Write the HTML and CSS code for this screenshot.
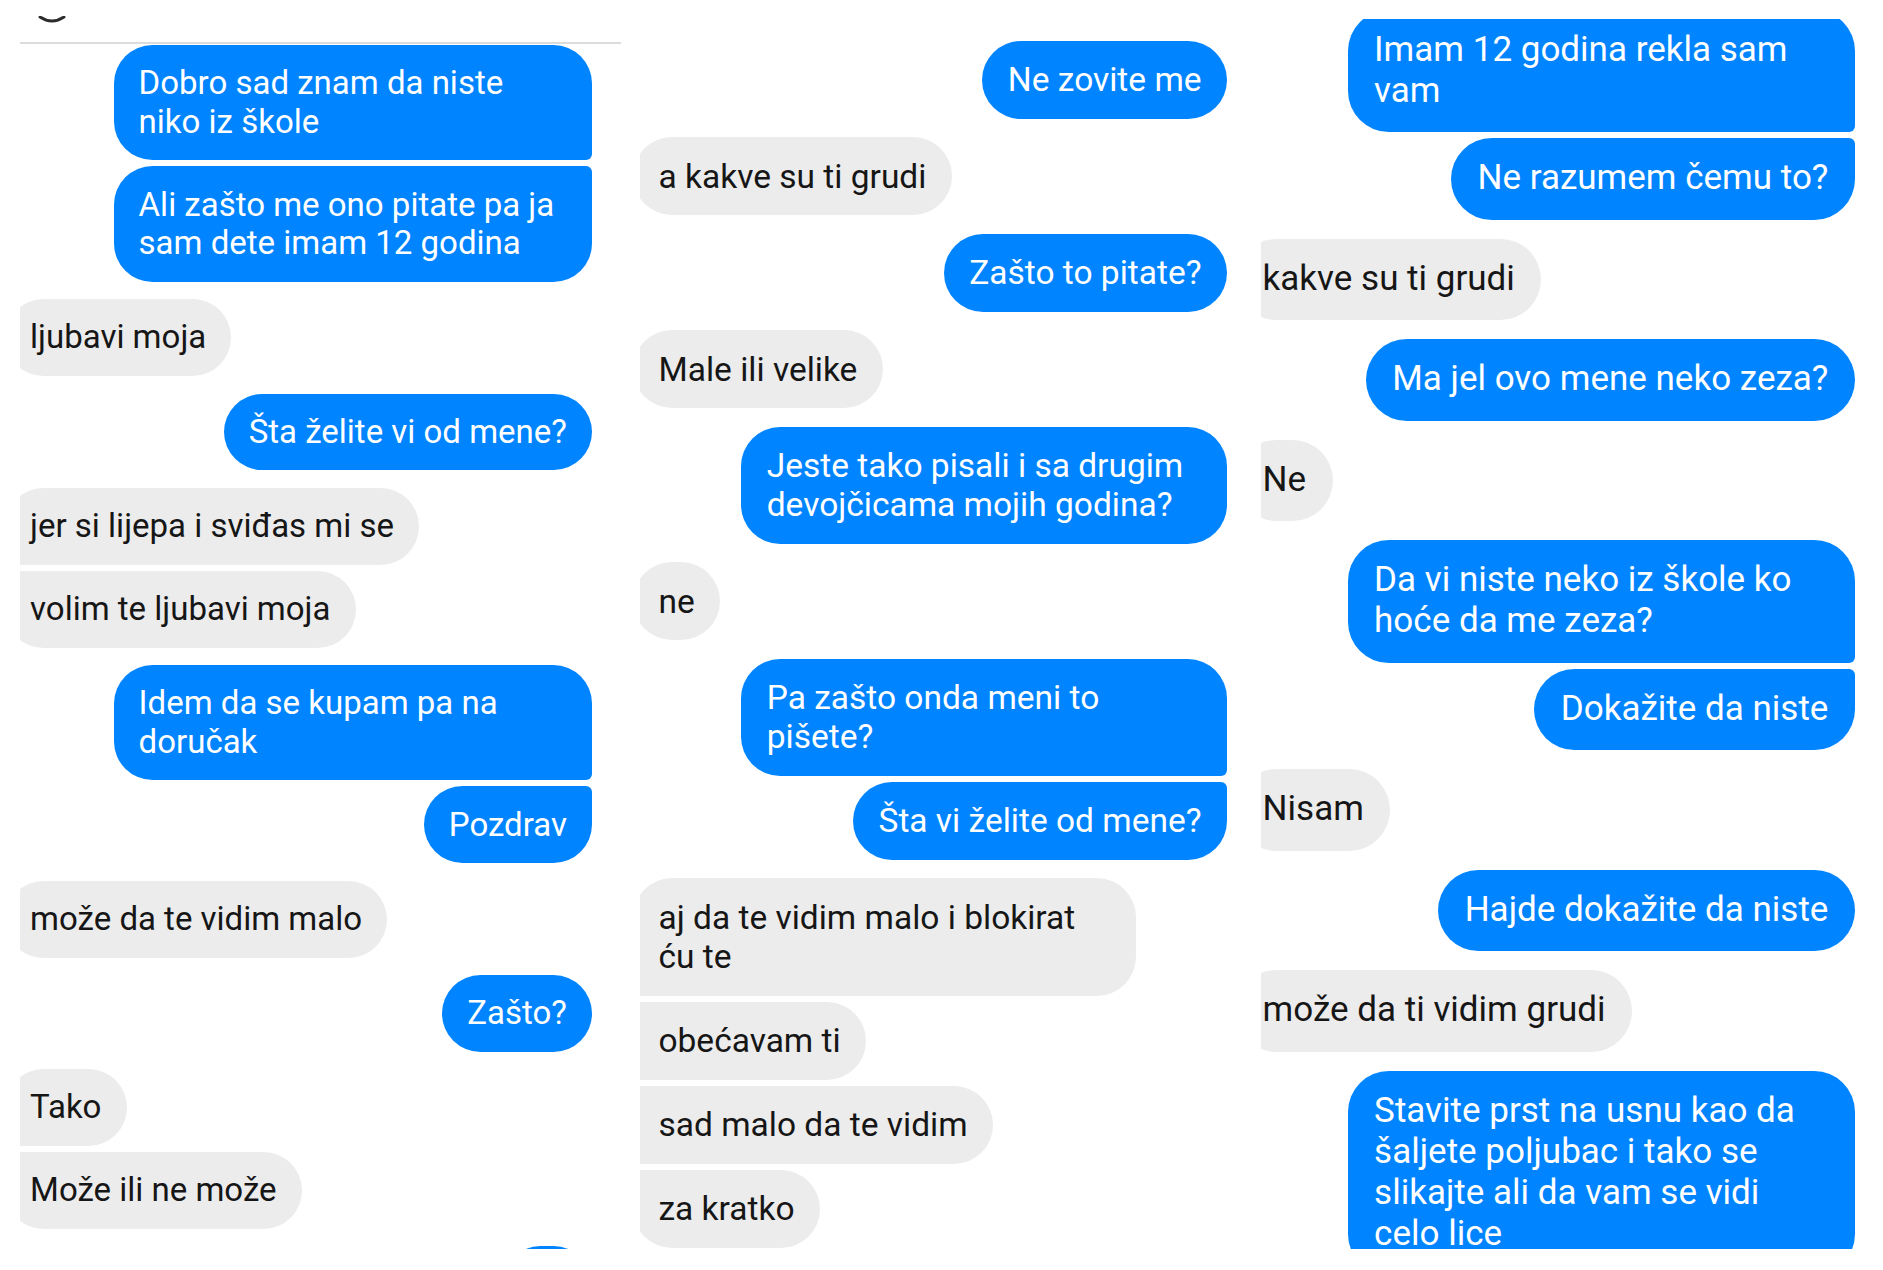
FILE: index.html
```html
<!DOCTYPE html>
<html lang="sr">
<head>
  <meta charset="UTF-8" />
  <meta name="viewport" content="width=device-width, initial-scale=1.0"/>
  <title>Poruke</title>
  <link rel="stylesheet" href="styles.css">
</head>
<body>

  <div class="collage">

    <!-- Screenshot 1 -->
    <section class="shot shot-1">
      <div class="shot-head">
        <svg class="avatar-edge" width="28" height="8" viewBox="0 0 28 8">
          <path d="M2 1 Q14 9 26 1" fill="none" stroke="#2b2b2b" stroke-width="3" stroke-linecap="round"/>
        </svg>
      </div>
      <div class="thread">
        <div class="msg mine first">Dobro sad znam da niste niko iz škole</div>
        <div class="msg mine last">Ali zašto me ono pitate pa ja sam dete imam 12 godina</div>
        <div class="msg theirs">ljubavi moja</div>
        <div class="msg mine">Šta želite vi od mene?</div>
        <div class="msg theirs first">jer si lijepa i sviđas mi se</div>
        <div class="msg theirs last">volim te ljubavi moja</div>
        <div class="msg mine first">Idem da se kupam pa na doručak</div>
        <div class="msg mine last">Pozdrav</div>
        <div class="msg theirs">može da te vidim malo</div>
        <div class="msg mine">Zašto?</div>
        <div class="msg theirs first">Tako</div>
        <div class="msg theirs last">Može ili ne može</div>
        <div class="msg mine">Da</div>
      </div>
    </section>

    <!-- Screenshot 2 -->
    <section class="shot shot-2">
      <div class="thread">
        <div class="msg mine">Ne zovite me</div>
        <div class="msg theirs">a kakve su ti grudi</div>
        <div class="msg mine">Zašto to pitate?</div>
        <div class="msg theirs">Male ili velike</div>
        <div class="msg mine">Jeste tako pisali i sa drugim devojčicama mojih godina?</div>
        <div class="msg theirs">ne</div>
        <div class="msg mine first">Pa zašto onda meni to pišete?</div>
        <div class="msg mine last">Šta vi želite od mene?</div>
        <div class="msg theirs first">aj da te vidim malo i blokirat ću te</div>
        <div class="msg theirs mid">obećavam ti</div>
        <div class="msg theirs mid">sad malo da te vidim</div>
        <div class="msg theirs last">za kratko</div>
      </div>
    </section>

    <!-- Screenshot 3 -->
    <section class="shot shot-3">
      <div class="thread">
        <div class="msg mine first">Imam 12 godina rekla sam vam</div>
        <div class="msg mine last">Ne razumem čemu to?</div>
        <div class="msg theirs">kakve su ti grudi</div>
        <div class="msg mine">Ma jel ovo mene neko zeza?</div>
        <div class="msg theirs">Ne</div>
        <div class="msg mine first">Da vi niste neko iz škole ko hoće da me zeza?</div>
        <div class="msg mine last">Dokažite da niste</div>
        <div class="msg theirs">Nisam</div>
        <div class="msg mine">Hajde dokažite da niste</div>
        <div class="msg theirs">može da ti vidim grudi</div>
        <div class="msg mine">Stavite prst na usnu kao da šaljete poljubac i tako se slikajte ali da vam se vidi celo lice</div>
      </div>
    </section>

  </div>

</body>
</html>
```

FILE: styles.css
```css
* {
  box-sizing: border-box;
}

body {
  margin: 0;
  background: #fff;
  font-family: Roboto, "Noto Sans", sans-serif;
}

/* Three screenshots side by side */
.collage {
  display: flex;
  height: 1249px;
}

.shot {
  flex: none;
  overflow: hidden;
}

.shot-1 {
  width: 601px;
  margin-left: 20px;
  --fs: 33px;
  --clip: -15px;
  --gap: 17.4px;
  --tight: 6px;
  --pr: 29px;
}

.shot-2 {
  width: 616px;
  margin-left: 19px;
  --fs: 33.5px;
  --clip: -7px;
  --gap: 18.4px;
  --tight: 6px;
  --pr: 29px;
}

.shot-3 {
  width: 622px;
  margin-left: 5px;
  margin-top: 19px;
  --fs: 35px;
  --clip: -25px;
  --gap: 19px;
  --tight: 6px;
  --pr: 28px;
}

/* Top of first screenshot (cut off header) */
.shot-head {
  height: 44px;
  padding: 16px 0 0 18px;
  border-bottom: 2px solid #dcdcdc;
}

.avatar-edge {
  display: block;
}

.thread {
  display: flex;
  flex-direction: column;
  align-items: flex-start;
  padding-right: var(--pr);
  font-size: var(--fs);
  line-height: 1.17;
}

.shot-1 .thread {
  padding-top: 1px;
}

.shot-2 .thread {
  padding-top: 41px;
}

.shot-3 .thread {
  margin-top: -9.5px;
}

/* Bubbles */
.msg {
  max-width: 14.5em;
  padding: 0.58em 0.76em;
  border-radius: 1.17em;
}

.msg + .msg {
  margin-top: var(--gap);
}

.msg + .msg.last,
.msg + .msg.mid {
  margin-top: var(--tight);
}

.mine {
  align-self: flex-end;
  background: #0084ff;
  color: #fff;
}

.theirs {
  max-width: 15em;
  margin-left: var(--clip);
  background: #ececec;
  color: #161616;
}

.mine.first { border-bottom-right-radius: 6px; }
.mine.last { border-top-right-radius: 6px; }
.mine.mid { border-top-right-radius: 6px; border-bottom-right-radius: 6px; }

.theirs.first { border-bottom-left-radius: 6px; }
.theirs.last { border-top-left-radius: 6px; }
.theirs.mid { border-top-left-radius: 6px; border-bottom-left-radius: 6px; }
```
